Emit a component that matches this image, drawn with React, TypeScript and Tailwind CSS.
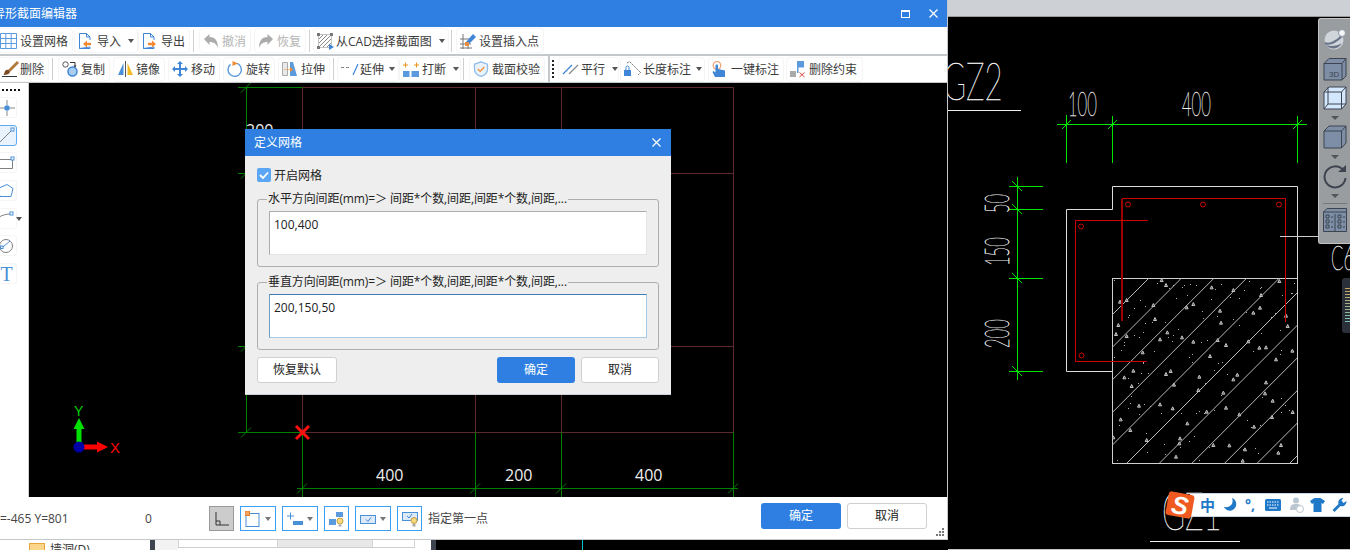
import React from 'react'

const FONT = "font-['Open_Sans','Noto_Sans_CJK_SC',sans-serif]"
const BLUE = '#4a90d9'
const ORANGE = '#f08a32'

function Ico({ children, w = 16, h = 16 }: { children: React.ReactNode; w?: number; h?: number }) {
  return (
    <svg width={w} height={h} viewBox={`0 0 ${w} ${h}`} className="shrink-0 overflow-visible">
      {children}
    </svg>
  )
}

function Caret({ className = '' }: { className?: string }) {
  return <span className={`block w-0 h-0 border-x-[3px] border-t-[4px] border-x-transparent border-t-[#555] ${className}`} />
}

function Sep({ className = '' }: { className?: string }) {
  return <span className={`block w-px h-[22px] bg-[#d0d0d0] shrink-0 ${className}`} />
}

function ToolBtn({ label, icon, caret, muted, className = '' }: {
  label: string
  icon: React.ReactNode
  caret?: boolean
  muted?: boolean
  className?: string
}) {
  return (
    <div className={`flex items-center h-[25px] shrink-0 gap-[3px] pl-[3px] rounded-[4px] border border-[#f5f5f5] text-xs whitespace-nowrap ${muted ? 'text-[#b4b4b4]' : 'text-[#3c3c3c]'} ${className}`}>
      {icon}
      <span className="pt-[2px]">{label}</span>
      {caret && <Caret className="ml-[4px]" />}
    </div>
  )
}

/* toolbar icons */
const DocIcon = ({ dir }: { dir: 'in' | 'out' }) => (
  <Ico>
    <path d="M1.500 .5h7l3.500 3.500v3M12 14v1.500H1.500z" fill="none" stroke="#3f86d6" />
    <path d="M1.500 .5v15" stroke="#3f86d6" />
    <path d="M8.500 .5v3.500h3.500" fill="none" stroke="#3f86d6" />
    {dir === 'in' ? (
      <path d="M5 11l4-3.500v2.200h4v2.600H9v2.200z" fill={ORANGE} />
    ) : (
      <path d="M14 11l-4-3.500v2.200H6v2.600h4v2.200z" fill={ORANGE} />
    )}
  </Ico>
)

const GridIcon = () => (
  <Ico>
    <path d="M-.5 .5h16v15h-16zM4.800 .5v15M10.200 .5v15M-.5 5.500h16M-.5 10.500h16" fill="none" stroke="#5c9ade" />
  </Ico>
)

const UndoIcon = ({ flip }: { flip?: boolean }) => (
  <Ico>
    <path
      transform={flip ? 'translate(16 0) scale(-1 1)' : undefined}
      d="M1 6l5.500-5v3c5 0 8.500 3 8.500 11-1.500-4-4-6-8.500-6v3z"
      fill="#acacac"
    />
  </Ico>
)

const CadIcon = () => (
  <Ico>
    <rect x="1.500" y="1.500" width="13" height="13" fill="none" stroke="#888" strokeDasharray="1 1" />
    <path d="M2 6l4-4M2 10l8-8M2 14L14 2M6 14l8-8M10 14l4-4" stroke="#888" />
    <path d="M0 0h3v3H0zM13 0h3v3h-3zM0 13h3v3H0z" fill="#777" />
    <path d="M12 11l5 3-5 3z" fill="#3f86d6" />
  </Ico>
)

const InsertIcon = () => (
  <Ico>
    <path d="M3 1v15M0 6h11M0 11h11M8 10v6M0 15h12" stroke="#777" fill="none" />
    <path d="M6 9l7-8 3 3-7 7-3 1z" fill="#3f86d6" />
    <path d="M5 9h4v4H5z" fill={ORANGE} opacity=".9" />
  </Ico>
)

const BrushIcon = () => (
  <Ico>
    <path d="M7 9l9-9 2 2-9 9z" fill="#b0793c" />
    <path d="M4 10c2-2 3.500-1.500 4.500 0s-.5 3-2.500 3.500-3.500.5-3.500.5 1-2 1.500-4z" fill="#7c4a22" />
    <path d="M1 15.500h15" stroke="#333" />
  </Ico>
)

const CopyIcon = () => (
  <Ico>
    <circle cx="3.500" cy="3.500" r="2.700" fill="none" stroke="#555" />
    <circle cx="10.500" cy="10.500" r="4.500" fill="#a9cdf0" stroke="#3f86d6" strokeWidth="1.500" />
    <path d="M8 1.500h5v4" fill="none" stroke="#333" />
    <path d="M11.500 4.500h3l-1.500 2z" fill="#333" />
  </Ico>
)

const MirrorIcon = () => (
  <Ico>
    <path d="M1 14L6.500 2v12z" fill="#4a90d9" />
    <path d="M8.500 0v16" stroke="#555" />
    <path d="M10.500 2l5.500 12h-5.500z" fill="#f5b921" />
  </Ico>
)

const MoveIcon = () => (
  <Ico>
    <path d="M8 0l3 3H9v4h4V5l3 3-3 3V9H9v4h2l-3 3-3-3h2V9H3v2L0 8l3-3v2h4V3H5z" fill="#3f86d6" />
  </Ico>
)

const RotateIcon = () => (
  <Ico>
    <path d="M9.500 2.200a6.700 6.700 0 1 1-6 1.200" fill="none" stroke="#5c9ade" strokeWidth="1.400" />
    <path d="M5.500 0l5.500 2.500L5.500 5z" fill={ORANGE} />
  </Ico>
)

const StretchIcon = () => (
  <Ico>
    <path d="M.5 1.500h5v13h-5z" fill="#e9e9e9" stroke="#aaa" />
    <path d="M8 15V1h3l4 14z" fill="#5c9ade" />
    <path d="M2 8.500h6V6l3 2.500-3 2.500V9H2z" fill={ORANGE} />
  </Ico>
)

const ExtendIcon = () => (
  <Ico w={18}>
    <path d="M0 6.500h10" stroke="#888" strokeDasharray="3 2" />
    <path d="M12 14l5-11" stroke="#3f86d6" strokeWidth="1.200" />
  </Ico>
)

const BreakIcon = () => (
  <Ico>
    <path d="M0 10h6.500v6H0zM8.500 10H16v6H8.500z" fill="#5c9ade" />
    <path d="M0 3.500h2V1.500h1v2h2v1H3v2H2v-2H0zM11 3.500h2V1.500h1v2h2v1h-2v2h-1v-2h-2z" fill="#e8941f" />
  </Ico>
)

const ShieldIcon = () => (
  <Ico>
    <path d="M8 .8l6.500 2.400v5c0 3.500-3 6-6.500 7.200C4.500 14.200 1.500 11.700 1.500 8.200v-5z" fill="#eaf3fc" stroke="#8fbcea" strokeWidth="1.300" />
    <path d="M4.800 8l2.400 2.400 4-4.400" fill="none" stroke={ORANGE} strokeWidth="1.300" />
  </Ico>
)

const ParallelIcon = () => (
  <Ico>
    <path d="M1 13L10 4" stroke="#3f86d6" strokeWidth="1.300" />
    <path d="M7 13l9-9" stroke="#888" strokeWidth="1.300" />
  </Ico>
)

const LengthIcon = () => (
  <Ico w={18}>
    <path d="M0 9h7v6H0z" fill="#3f86d6" />
    <path d="M2 9V6.500a1.500 1.500 0 0 1 3 0V9" fill="none" stroke="#3f86d6" />
    <path d="M6 1l10 10M3 2l3-1.500M14 14l3-3" stroke="#777" strokeDasharray="2 1" fill="none" />
  </Ico>
)

const HandIcon = () => (
  <Ico>
    <circle cx="5" cy="4.500" r="3.800" fill="none" stroke="#f0a47a" strokeWidth="1.300" />
    <path d="M3.500 4.500c0-1.300 2.500-1.300 2.500 0V8l7 1.500V16H3l-2.500-5 1-1 2 1.500z" fill="#3f86d6" />
  </Ico>
)

const UnconstrainIcon = () => (
  <Ico>
    <path d="M7 0h7v6.500H8.500V12H7z" fill="#5c9ade" />
    <path d="M0 10h6v6H0z" fill="#aaa" />
    <path d="M9.500 11.500l5 4.500M14.500 11.500l-5 4.500" stroke="#d9453a" />
  </Ico>
)

/* left rail icons */
function RailBtn({ active, children }: { active?: boolean; children: React.ReactNode }) {
  return (
    <div className={`flex items-center justify-center w-[21px] h-[21px] -ml-[4px] rounded-[3px] border ${active ? 'bg-[#e8f3fd] border-[#5aa9f5]' : 'border-[#f5f5f5]'}`}>
      {children}
    </div>
  )
}

/* footer snap buttons */
function SnapBtn({ children, caret, className = '' }: { children: React.ReactNode; caret?: boolean; className?: string }) {
  return (
    <div className={`flex items-center h-[25px] shrink-0 border border-[#3a9ff5] pl-[4px] ${className}`}>
      {children}
      {caret && <Caret className="ml-auto mr-[4px] border-t-[#777]" />}
    </div>
  )
}

/* the drawing in the window behind the dialog */
function GridCanvas() {
  const red = '#5d2a2f'
  const green = '#008000'
  const ticks: [number, number][] = [[246, 87], [246, 173], [246, 346], [246, 432], [302, 488], [475, 488], [561, 488], [733, 488]]
  return (
    <svg viewBox="29 83 918 414" className="block w-[918px] h-[414px]">
      <path d="M302.500 87.500H733.500V432.500H302.500M475.500 87.500V432.500M561.500 87.500V432.500M302.500 87.500V432.500M246 173.500H733.500M246 346.500H733.500" fill="none" stroke={red} />
      <path d="M238 87.500H302.500M246.500 87V432.500M238 173.500H246.500M238 346.500H246.500M238 432.500H302.500M302.500 432V497M475.500 432V497M561.500 432V497M733.500 432V497M297 488.500H738" fill="none" stroke={green} />
      {ticks.map(([x, y]) => (
        <path key={`${x}-${y}`} d={`M${x - 5} ${y + 5.500}L${x + 5} ${y - 4.500}`} stroke={green} />
      ))}
      <path d="M296 426l13 13M309 426l-13 13" stroke="#ff1010" strokeWidth="3" />
      <g fontFamily="'Open Sans',sans-serif" fontSize="16" fill="#eee">
        <text x="376" y="481">400</text>
        <text x="505" y="481">200</text>
        <text x="635" y="481">400</text>
        <text x="246" y="136">200</text>
      </g>
      <path d="M79 447V426" stroke="#00e000" strokeWidth="5" />
      <path d="M79 418l5.500 11h-11z" fill="#00e000" />
      <path d="M79 447H98" stroke="#ff0000" strokeWidth="5" />
      <path d="M108 447l-11-5.500v11z" fill="#ff0000" />
      <circle cx="79" cy="447" r="5.500" fill="#0000a8" />
      <text x="74" y="416" fontFamily="'Liberation Sans',sans-serif" fontSize="14" fill="#00d000">Y</text>
      <text x="110" y="453" fontFamily="'Liberation Sans',sans-serif" fontSize="15" fill="#ff0000">X</text>
    </svg>
  )
}

/* spots of the concrete fill, read off the picture */
const SPECKS: [number, number][] = [
  [635, 30], [648, 45], [785, 52], [850, 60], [933, 75], [988, 33], [510, 95], [530, 90], [610, 105], [730, 102], [710, 112],
  [810, 122], [930, 113], [910, 128], [615, 147], [505, 165], [498, 192], [530, 198], [652, 187], [696, 202], [730, 215],
  [630, 208], [813, 158], [803, 210], [895, 214], [828, 225], [948, 232], [928, 233], [1027, 242], [1013, 168], [1008, 137],
  [978, 268], [780, 258], [578, 247], [550, 302], [523, 322], [545, 348], [648, 312], [662, 303], [748, 320], [672, 344],
  [745, 360], [820, 368], [850, 328], [862, 314], [948, 337], [945, 370], [968, 392], [567, 407], [630, 403], [668, 415],
  [770, 425], [828, 413], [868, 433], [966, 441], [712, 460], [512, 448], [1028, 426], [912, 470], [541, 480], [490, 502],
  [590, 510], [690, 505], [688, 520], [790, 525], [838, 526], [885, 538], [993, 525], [985, 548], [678, 560], [878, 572],
]

const frac = (n: number) => n - Math.floor(n)

function DetailDrawing() {
  const ticksV = [186, 209, 278, 371]
  const ticksH = [1066, 1112, 1297]
  const hatch = [-5, -4, -3, -2, -1, 0, 1, 2, 3, 4, 5]
  const dots = Array.from({ length: 110 }, (_, i) => [
    Math.floor(1114 + frac(Math.sin(i * 12.9898) * 43758.5453) * 181),
    Math.floor(280 + frac(Math.sin(i * 78.233) * 24634.6345) * 181),
  ])
  return (
    <svg viewBox="948 17 402 532" className="block w-[402px] h-[532px]">
      <defs>
        <clipPath id="fill-clip">
          <rect x="1112" y="278" width="185" height="185" />
        </clipPath>
      </defs>

      {/* dimension lines */}
      <path d="M1057 124.500H1307M1066.500 115V163M1112.500 116V163M1297.500 116V163M1017.500 177V380M1009 186.500H1043M1009 209.500H1043M1009 278.500H1043M1009 371.500H1043" fill="none" stroke="#00e600" />
      {ticksH.map((x) => <path key={x} d={`M${x - 4} 129L${x + 5} 120`} stroke="#00e600" />)}
      {ticksV.map((y) => <path key={y} d={`M1012 ${y - 5}L1022 ${y + 5}`} stroke="#00e600" />)}

      {/* section outline */}
      <path d="M1112.500 209.500V186.500H1297.500V278.500M1112.500 209.500H1066.500V371.500H1112.500" fill="none" stroke="#dcdcdc" />
      <rect x="1112.500" y="278.500" width="185" height="185" fill="none" stroke="#cfcfcf" />

      <g clipPath="url(#fill-clip)" stroke="#b8b8b8" fill="none">
        {hatch.map((i) => {
          const x = 1127 + 32.6 * i
          return <path key={i} d={`M${x} 463L${x + 185} 278`} />
        })}
      </g>
      <g stroke="#c4c4c4" fill="#555" clipPath="url(#fill-clip)">
        {SPECKS.map(([zx, zy]) => {
          const x = 950 + zx / 3
          const y = 270 + zy / 3
          return <path key={`${zx}-${zy}`} d={`M${x} ${y - 1.500}l1.500 3h-3z`} />
        })}
      </g>
      <g fill="#b0b0b0">
        {dots.map(([x, y], i) => <rect key={i} x={x} y={y} width="1" height="1" />)}
      </g>

      {/* rebar */}
      <path d="M1122.500 321V198.500H1285.500V322" fill="none" stroke="#d00000" />
      <path d="M1122 199V321" stroke="#9c0000" strokeWidth="2" />
      <path d="M1148 220.500H1075.500V361.500H1147" fill="none" stroke="#d00000" />
      <g fill="none" stroke="#d00000">
        <circle cx="1128" cy="204.500" r="2.500" />
        <circle cx="1203" cy="204.500" r="2.500" />
        <circle cx="1279" cy="204.500" r="2.500" />
        <circle cx="1081" cy="226.500" r="2.500" />
        <circle cx="1081.500" cy="355.500" r="2.500" />
      </g>
      <path d="M1280 236.500H1318" stroke="#ccc" />

      {/* labels in the thin drawing font */}
      <g fontFamily="Lato,'Liberation Sans',sans-serif" fontWeight="100" fill="#f0f0f0" stroke="#f0f0f0" strokeWidth=".5">
        <text transform="translate(943 100) scale(.6 1)" fontSize="52">GZ2</text>
        <text transform="translate(1068 116) scale(.5 1)" fontSize="33">100</text>
        <text transform="translate(1182 116) scale(.5 1)" fontSize="33">400</text>
        <text transform="translate(1009 213) rotate(-90) scale(.5 1)" fontSize="33">50</text>
        <text transform="translate(1009 266) rotate(-90) scale(.5 1)" fontSize="33">150</text>
        <text transform="translate(1009 348) rotate(-90) scale(.5 1)" fontSize="33">200</text>
        <text transform="translate(1331 270) scale(.55 1)" fontSize="33">C6</text>
        <text transform="translate(1162 530) scale(.6 1)" fontSize="52">GZ1</text>
      </g>
      <path d="M948 110.500H1021M1150 541.500H1240" stroke="#f0f0f0" />
    </svg>
  )
}

/* grey view cube rail on the far right */
function ViewRail() {
  const box = '#7d8ea6'
  const line = '#3d4450'
  return (
    <div className="absolute left-[1318px] top-[18px] w-[32px] h-[226px] flex flex-col items-center pt-[8px] rounded-l-[3px] border-l border-y border-[#c2c4c6] bg-[#9a9da0]">
      <svg width="24" height="24" viewBox="0 0 24 24">
        <circle cx="11" cy="13" r="9.500" fill="#cfd5db" />
        <path d="M2 16c4 2 11-1 18-8" stroke="#6a7688" strokeWidth="2" fill="none" />
        <path d="M3 18c4 5 12 5 16-2 0 0-7 5-16 2z" fill="#6a7688" />
        <circle cx="19" cy="6" r="3.500" fill="#f3f5f7" stroke="#8d96a2" />
      </svg>
      <svg width="24" height="24" viewBox="0 0 24 24" className="mt-[6px]">
        <path d="M1 6.500L6 1.500H23V19l-4 4H1z" fill={box} stroke={line} />
        <path d="M1 6.500H19V23M19 6.500L23 1.500" fill="none" stroke={line} />
        <text x="6" y="20" fontFamily="'Liberation Sans',sans-serif" fontSize="8" fill={line}>3D</text>
      </svg>
      <svg width="24" height="24" viewBox="0 0 24 24" className="mt-[5px]">
        <path d="M1 6L6 1H23V18l-4.500 5H1z" fill="#d3e7fd" stroke={line} />
        <path d="M1 6H18.500V23M18.500 6L23 1M5 1V18H23M5 18L1 23" fill="none" stroke={line} />
      </svg>
      <Caret className="mt-[6px] border-x-[4px] border-t-[4px] border-t-[#3d4450]" />
      <svg width="24" height="24" viewBox="0 0 24 24" className="mt-[5px]">
        <path d="M1 6L6 1H23V18l-4.500 5H1z" fill={box} stroke={line} />
        <path d="M1 6H18.500V23M18.500 6L23 1" fill="none" stroke={line} />
      </svg>
      <Caret className="mt-[6px] border-x-[4px] border-t-[4px] border-t-[#3d4450]" />
      <svg width="24" height="24" viewBox="0 0 24 24" className="mt-[6px]">
        <path d="M20 5a10.500 10.500 0 1 0 2.500 8" fill="none" stroke={line} strokeWidth="2" />
        <path d="M15 7h8V0z" fill={line} />
      </svg>
      <Caret className="mt-[5px] border-x-[4px] border-t-[4px] border-t-[#3d4450]" />
      <div className="w-[24px] h-px bg-[#74777b] mt-[5px]" />
      <svg width="24" height="24" viewBox="0 0 24 24" className="mt-[4px]">
        <path d="M.5 4L4 .5H23.500V23.500H.5z" fill={box} stroke={line} />
        <path d="M.5 4H23.500M12 6V23" stroke={line} fill="none" />
        <path d="M3 7h3v3H3zM3 12h3v3H3zM3 17h3v3H3zM15 7h3v3h-3zM15 12h3v3h-3zM15 17h3v3h-3z" fill="none" stroke={line} />
        <path d="M8 9h2M8 14h2M8 19h2M20 9h2M20 14h2M20 19h2" stroke={line} />
      </svg>
    </div>
  )
}

/* input method status bar */
function ImeBar() {
  return (
    <div className="absolute left-[1167px] top-[493px] flex items-center">
      <div className="relative z-10 flex items-center justify-center w-[26px] h-[24px] rotate-[10deg] rounded-[3px] bg-[#f05a20]">
        <span className="font-['Liberation_Sans',sans-serif] font-bold italic text-[25px] leading-none text-white">S</span>
      </div>
      <div className="flex items-center -ml-[3px] w-[160px] h-[24px] bg-white border-y border-[#c5d5e5] pl-[10px]">
        <span className="text-[15px] font-bold text-[#1f78c8] font-['Noto_Sans_CJK_SC',sans-serif]">中</span>
        <svg width="14" height="14" viewBox="0 0 14 14" className="ml-[8px]">
          <path d="M9 0c2 5-1 10-8 9 2 4 9 6 12-1 1-4-1-7-4-8z" fill="#1f78c8" />
        </svg>
        <span className="w-[10px] ml-[8px] text-[14px] font-bold leading-none text-[#1f78c8]">°,</span>
        <svg width="16" height="12" viewBox="0 0 16 12" className="ml-[10px]">
          <rect width="16" height="12" rx="1.500" fill="#1f78c8" />
          <path d="M2 3h12M2 6h12" stroke="#fff" strokeDasharray="1.500 1" />
          <path d="M4 9h8" stroke="#fff" />
        </svg>
        <svg width="15" height="16" viewBox="0 0 15 16" className="ml-[8px]">
          <circle cx="7" cy="3.500" r="3" fill="#bcc6d0" />
          <path d="M1 13c0-5 2-6 6-6s6 1 6 6z" fill="#bcc6d0" />
          <circle cx="11" cy="12" r="3.500" fill="#fff" stroke="#bcc6d0" />
        </svg>
        <svg width="15" height="14" viewBox="0 0 15 14" className="ml-[6px]">
          <path d="M4.500 0h6L15 3l-2 3-1.500-1v9h-8V5L2 6 0 3z" fill="#1f78c8" />
        </svg>
        <svg width="15" height="14" viewBox="0 0 14 14" className="ml-[7px] shrink-0">
          <path d="M0 12l6-6c-1-3 1-6 5-6L9 2.500 11 5l3-2c0 4-3 6-6 5l-6 6z" fill="#1f78c8" />
        </svg>
      </div>
    </div>
  )
}

function Group({ legend, value, focused }: { legend: string; value: string; focused?: boolean }) {
  return (
    <div className="relative w-[402px] h-[68px] rounded-[3px] border border-[#aeaeae] px-[11px] pt-[11px]">
      <span className="absolute -top-[9px] left-[9px] px-px bg-[#eeeeee] text-xs leading-[16px] tracking-[-0.1px] whitespace-nowrap text-[#222]">{legend}</span>
      <div className={`w-[378px] h-[44px] bg-white border pl-[4px] pt-[3px] text-xs leading-[20px] text-[#222] ${focused ? 'border-[#a9cbe6] border-t-[#3f7db5] border-l-[#6c9dc6]' : 'border-[#e4e4e4] border-t-[#adadad] border-l-[#adadad]'}`}>
        {value}
      </div>
    </div>
  )
}

function GridDialog() {
  return (
    <div className="absolute left-[245px] top-[129px] w-[426px] h-[266px] flex flex-col bg-[#eeeeee] border-b border-[#c9d2da]">
      <div className="flex items-center justify-between h-[27px] pl-[9px] pr-[10px] bg-[#2e7fe1] text-xs text-white">
        <span>定义网格</span>
        <svg width="9" height="9" viewBox="0 0 9 9">
          <path d="M.5 .5l8 8M8.500 .5l-8 8" stroke="#fff" strokeWidth="1.200" />
        </svg>
      </div>
      <div className="flex flex-col px-[12px]">
        <label className="flex items-center gap-[3px] mt-[12px] h-[14px] text-xs text-[#222]">
          <span className="flex items-center justify-center w-[14px] h-[14px] rounded-[2px] bg-[#5ba6f5]">
            <svg width="10" height="8" viewBox="0 0 10 8">
              <path d="M1 4l3 3 5-5.500" fill="none" stroke="#fff" strokeWidth="1.800" />
            </svg>
          </span>
          <span className="pt-[2px]">开启网格</span>
        </label>
        <div className="mt-[17px]">
          <Group legend="水平方向间距(mm)=＞ 间距*个数,间距,间距*个数,间距,..." value="100,400" />
        </div>
        <div className="mt-[15px]">
          <Group legend="垂直方向间距(mm)=＞ 间距*个数,间距,间距*个数,间距,..." value="200,150,50" focused />
        </div>
        <div className="flex items-center mt-[7px] text-xs">
          <button className="w-[80px] h-[26px] rounded-[3px] border border-[#d0d0d0] bg-white text-[#222]">恢复默认</button>
          <button className="ml-auto w-[78px] h-[26px] rounded-[3px] bg-[#2e7fe1] text-white">确定</button>
          <button className="ml-[6px] w-[78px] h-[26px] rounded-[3px] border border-[#d0d0d0] bg-white text-[#222]">取消</button>
        </div>
      </div>
    </div>
  )
}

function EditorWindow() {
  return (
    <div className="flex flex-col w-[948px] h-[540px] bg-white border-r border-b border-[#c5c8ca]">
      {/* title bar */}
      <div className="flex items-center h-[27px] shrink-0 bg-[#2e7fe1] text-xs text-white">
        <span className="-ml-[7px]">异形截面编辑器</span>
        <svg width="9" height="8" viewBox="0 0 9 8" className="ml-auto">
          <rect x=".5" y=".5" width="8" height="7" fill="none" stroke="#fff" strokeWidth="1" />
          <path d="M0 1h9" stroke="#fff" strokeWidth="2" />
        </svg>
        <svg width="9" height="9" viewBox="0 0 9 9" className="ml-[19px] mr-[9px]">
          <path d="M.5 .5l8 8M8.500 .5l-8 8" stroke="#fff" strokeWidth="1.200" />
        </svg>
      </div>

      {/* first toolbar */}
      <div className="flex items-center h-[27px] shrink-0 overflow-hidden">
        <ToolBtn label="设置网格" icon={<GridIcon />} className="w-[76px] -ml-[3px]" />
        <ToolBtn label="导入" icon={<DocIcon dir="in" />} caret className="w-[64px] ml-px" />
        <ToolBtn label="导出" icon={<DocIcon dir="out" />} className="w-[52px]" />
        <Sep className="ml-[3px]" />
        <ToolBtn label="撤消" icon={<UndoIcon />} muted className="w-[52px] ml-[5px]" />
        <ToolBtn label="恢复" icon={<UndoIcon flip />} muted className="w-[52px] ml-[3px]" />
        <Sep className="ml-[3px]" />
        <ToolBtn label="从CAD选择截面图" icon={<CadIcon />} caret className="w-[136px] ml-[3px]" />
        <Sep className="ml-[2px]" />
        <ToolBtn label="设置插入点" icon={<InsertIcon />} className="w-[88px] ml-[4px]" />
      </div>
      <div className="h-[2px] shrink-0 bg-[#c5c8ca]" />

      {/* second toolbar */}
      <div className="flex items-center h-[26px] shrink-0 overflow-hidden">
        <ToolBtn label="删除" icon={<BrushIcon />} className="w-[52px] -ml-[3px]" />
        <Sep className="ml-[3px]" />
        <ToolBtn label="复制" icon={<CopyIcon />} className="w-[52px] ml-[5px]" />
        <ToolBtn label="镜像" icon={<MirrorIcon />} className="w-[52px] ml-[3px]" />
        <ToolBtn label="移动" icon={<MoveIcon />} className="w-[52px] ml-[3px]" />
        <ToolBtn label="旋转" icon={<RotateIcon />} className="w-[52px] ml-[3px]" />
        <ToolBtn label="拉伸" icon={<StretchIcon />} className="w-[52px] ml-[3px]" />
        <Sep className="ml-[3px]" />
        <ToolBtn label="延伸" icon={<ExtendIcon />} caret className="w-[62px] ml-[3px] gap-px" />
        <ToolBtn label="打断" icon={<BreakIcon />} caret className="w-[62px]" />
        <Sep className="ml-[2px]" />
        <ToolBtn label="截面校验" icon={<ShieldIcon />} className="w-[76px] ml-[5px]" />
        <span className="block w-[2px] h-[26px] ml-[3px] shrink-0 bg-[#c5c8ca]" />
        <span className="block w-[2px] h-[18px] ml-[2px] shrink-0 bg-[repeating-linear-gradient(180deg,#222_0_2px,transparent_2px_4px)]" />
        <ToolBtn label="平行" icon={<ParallelIcon />} caret className="w-[61px] ml-[4px]" />
        <ToolBtn label="长度标注" icon={<LengthIcon />} caret className="w-[85px] ml-px gap-px" />
        <ToolBtn label="一键标注" icon={<HandIcon />} className="w-[76px] ml-[3px]" />
        <ToolBtn label="删除约束" icon={<UnconstrainIcon />} className="w-[77px] ml-[2px]" />
      </div>
      <div className="h-px shrink-0 bg-[#c5c8ca]" />

      {/* rail + canvas */}
      <div className="flex h-[414px] shrink-0">
        <div className="flex flex-col w-[29px] shrink-0 pt-[6px] border-r border-[#cfcfcf] bg-white">
          <span className="block w-[19px] h-[2px] ml-[2px] bg-[repeating-linear-gradient(90deg,#111_0_2px,transparent_2px_4px)]" />
          <div className="flex flex-col gap-[6.700px] mt-[6px]">
            <RailBtn>
              <svg width="16" height="16" viewBox="0 0 16 16">
                <path d="M8 0v5M8 11v5M0 8h5M11 8h5" stroke="#8a8a8a" />
                <circle cx="8" cy="8" r="2.800" fill="#4a90d9" />
              </svg>
            </RailBtn>
            <RailBtn active>
              <svg width="16" height="16" viewBox="0 0 16 16">
                <path d="M1 15L13 3" stroke="#808080" />
                <rect x="12" y="1" width="3" height="3" fill="#fff" stroke={BLUE} />
              </svg>
            </RailBtn>
            <RailBtn>
              <svg width="16" height="16" viewBox="0 0 16 16">
                <path d="M0 4.500H13.500V13.500H0z" fill="none" stroke="#808080" />
                <rect x="12" y="2" width="3" height="3" fill="#fff" stroke={BLUE} />
              </svg>
            </RailBtn>
            <RailBtn>
              <svg width="16" height="16" viewBox="0 0 16 16">
                <path d="M8 1.500l6 4-2 8H1L-1 5.500z" fill="none" stroke={BLUE} />
              </svg>
            </RailBtn>
            <div className="relative w-[21px]">
              <RailBtn>
                <svg width="16" height="16" viewBox="0 0 16 16">
                  <path d="M0 7c4-2 7-3 11-3" fill="none" stroke="#808080" />
                  <rect x="11" y="2" width="3" height="3" fill="#fff" stroke={BLUE} />
                </svg>
              </RailBtn>
              <Caret className="absolute left-[16px] top-[9px]" />
            </div>
            <RailBtn>
              <svg width="16" height="16" viewBox="0 0 16 16">
                <circle cx="7" cy="8" r="6.500" fill="none" stroke="#808080" />
                <path d="M4 9l7-6" stroke={BLUE} />
                <rect x="1.500" y="8" width="2.500" height="2.500" fill="#fff" stroke={BLUE} />
              </svg>
            </RailBtn>
            <RailBtn>
              <span className="font-['Liberation_Serif',serif] text-[20px] leading-none text-[#4a90d9]">T</span>
            </RailBtn>
          </div>
        </div>
        <div className="w-[918px] h-[414px] bg-black">
          <GridCanvas />
        </div>
      </div>

      {/* status bar */}
      <div className="relative flex items-center h-[42px] shrink-0 pt-px text-xs text-[#444]">
        <span className="w-[146px] shrink-0 -ml-px pl-px whitespace-nowrap">=-465 Y=801</span>
        <span className="w-[64px] shrink-0">0</span>
        <div className="flex items-center justify-center w-[25px] h-[25px] shrink-0 bg-[#cccccc] border border-[#999]">
          <svg width="14" height="14" viewBox="0 0 14 14">
            <path d="M1 0v13h13M1 9h4v4" fill="none" stroke="#333" />
          </svg>
        </div>
        <SnapBtn caret className="w-[36px] ml-[6px]">
          <svg width="16" height="16" viewBox="0 0 16 16">
            <rect x="1" y="2.500" width="13" height="13" fill="none" stroke={BLUE} />
            <rect x="0" y="0" width="4.500" height="4.500" fill="#f6a55c" stroke="#e08030" />
          </svg>
        </SnapBtn>
        <SnapBtn caret className="w-[36px] ml-[6px]">
          <svg width="16" height="16" viewBox="0 0 16 16">
            <path d="M0 5h7M3.500 1.500v7" stroke={BLUE} />
            <path d="M6 10h10v4H6z" fill={BLUE} />
          </svg>
        </SnapBtn>
        <SnapBtn className="w-[25px] ml-[6px]">
          <svg width="16" height="16" viewBox="0 0 16 16">
            <path d="M7 1h7v5H7zM0 8h7v6H0z" fill="#5c9ade" />
            <circle cx="11" cy="10" r="3" fill="#f8d880" stroke="#c0a040" />
            <path d="M9.500 13.500h3v2h-3z" fill="#aaa" />
          </svg>
        </SnapBtn>
        <SnapBtn caret className="w-[36px] ml-[6px]">
          <svg width="16" height="12" viewBox="0 0 16 12">
            <rect x=".5" y="2.500" width="15" height="8" fill="#dce9f7" stroke={BLUE} />
            <path d="M6 6.500l2 2 3-4" fill="none" stroke="#3f86d6" />
          </svg>
        </SnapBtn>
        <SnapBtn className="w-[25px] ml-[6px]">
          <svg width="16" height="16" viewBox="0 0 16 16">
            <rect x=".5" y="1.500" width="15" height="8" fill="#dce9f7" stroke={BLUE} />
            <path d="M5 5l2 2 3-4" fill="none" stroke="#3f86d6" />
            <circle cx="12" cy="9.500" r="3" fill="#f8d880" stroke="#c0a040" />
            <path d="M10.500 13h3v2.500h-3z" fill="#aaa" />
          </svg>
        </SnapBtn>
        <span className="ml-[6px] whitespace-nowrap">指定第一点</span>
        <button className="ml-auto -mt-[5px] w-[80px] h-[26px] rounded-[3px] bg-[#2e7fe1] text-white">确定</button>
        <button className="ml-[6px] mr-[20px] -mt-[5px] w-[80px] h-[26px] rounded-[3px] border border-[#cfcfcf] bg-white text-[#222]">取消</button>
        <svg width="8" height="8" viewBox="0 0 8 8" className="absolute right-[3px] bottom-[3px]">
          <path d="M6 0h2v2H6zM3 3h2v2H3zM6 3h2v2H6zM0 6h2v2H0zM3 6h2v2H3zM6 6h2v2H6z" fill="#777" />
        </svg>
      </div>
    </div>
  )
}

/* what shows of the window underneath */
function LowerSliver() {
  return (
    <div className="flex h-[10px] overflow-hidden bg-black">
      <div className="flex items-start w-[150px] shrink-0 bg-white pl-[29px] pt-[3px]">
        <span className="block w-[16px] h-[7px] bg-[#fbd68a] border-x border-t border-[#e8a53a]" />
        <span className="ml-[5px] text-xs leading-[14px] text-[#333]">墙洞(D)</span>
      </div>
      <div className="w-[5px] shrink-0 bg-[#3d4450]" />
      <div className="w-[23px] shrink-0 bg-[#f2f2f2]" />
      <div className="w-[237px] shrink-0 bg-white">
        <div className="flex h-[8px] border-b border-[#cfcfcf]">
          <div className="w-[100px] bg-white border-x border-[#d5d5d5]" />
          <div className="w-[94px] bg-[#e8e8e8]" />
          <div className="w-[43px] bg-white border-x border-[#d5d5d5]" />
        </div>
      </div>
      <div className="w-[16px] shrink-0 bg-white" />
      <div className="w-[5px] shrink-0 bg-[#3d4450]" />
      <div className="w-px h-full ml-[146px] shrink-0 bg-[#00c8d0]" />
    </div>
  )
}

export default function App() {
  return (
    <div className={`relative flex w-[1350px] h-[550px] overflow-hidden bg-black ${FONT}`}>
      <div className="flex flex-col w-[948px] shrink-0">
        <EditorWindow />
        <LowerSliver />
      </div>
      <div className="flex flex-col w-[402px] shrink-0">
        <div className="h-[17px] shrink-0 bg-[#cdd0d4] border-b border-[#9a9a9a]" />
        <DetailDrawing />
        <div className="h-px bg-[#c5c8ca]" />
      </div>
      <GridDialog />
      <ViewRail />
      <div className="absolute left-[1342px] top-[278px] w-[10px] h-[55px] rounded-l-[3px] bg-[#2a2f3a] pt-[10px] pl-[3px]">
        <span className="block w-[7px] h-[36px] bg-[repeating-linear-gradient(180deg,transparent_0_1px,#2a2f3a_1px_3px),linear-gradient(180deg,#c9a35a,#6fc7b8)]" />
      </div>
      <ImeBar />
    </div>
  )
}
